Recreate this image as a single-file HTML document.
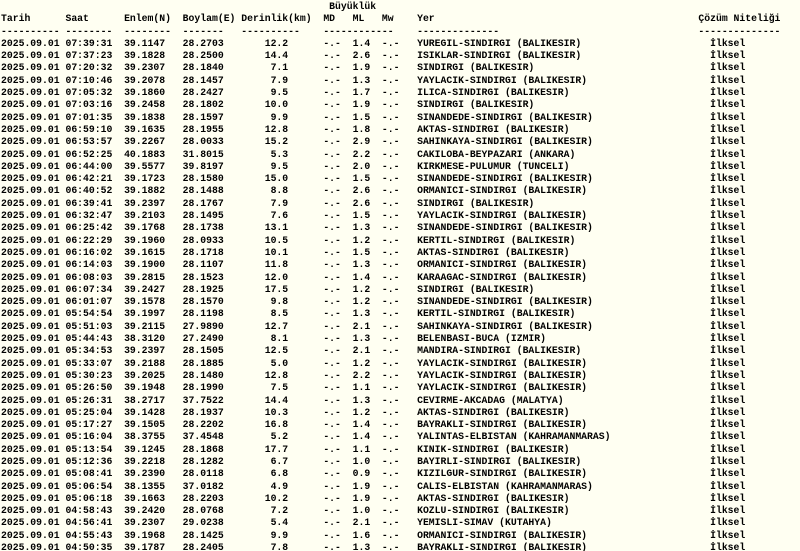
<!DOCTYPE html>
<html><head><meta charset="utf-8">
<style>
html,body{margin:0;padding:0;background:#fffff2;width:800px;height:551px;overflow:hidden}
#w{font-family:"Liberation Mono",monospace;font-weight:bold;font-size:9.78px;line-height:12.3px;color:#000;padding-left:1px;padding-top:1px}
.r{position:relative;white-space:pre;height:12.3px}
.r b{position:absolute;top:0;left:121ch}
.r i{position:absolute;top:0;left:119ch;font-style:normal}
</style></head><body><div id="w">
<div class="r">                                                        Büyüklük</div>
<div class="r">Tarih      Saat      Enlem(N)  Boylam(E) Derinlik(km)  MD   ML   Mw    Yer<i>Çözüm Niteliği</i></div>
<div class="r">---------- --------  --------  -------   ----------    ------------    --------------<i>--------------</i></div>
<div class="r">2025.09.01 07:39:31  39.1147   28.2703       12.2      -.-  1.4  -.-   YUREGIL-SINDIRGI (BALIKESIR)<b>İlksel</b></div>
<div class="r">2025.09.01 07:37:23  39.1828   28.2500       14.4      -.-  2.6  -.-   ISIKLAR-SINDIRGI (BALIKESIR)<b>İlksel</b></div>
<div class="r">2025.09.01 07:20:32  39.2307   28.1840        7.1      -.-  1.9  -.-   SINDIRGI (BALIKESIR)<b>İlksel</b></div>
<div class="r">2025.09.01 07:10:46  39.2078   28.1457        7.9      -.-  1.3  -.-   YAYLACIK-SINDIRGI (BALIKESIR)<b>İlksel</b></div>
<div class="r">2025.09.01 07:05:32  39.1860   28.2427        9.5      -.-  1.7  -.-   ILICA-SINDIRGI (BALIKESIR)<b>İlksel</b></div>
<div class="r">2025.09.01 07:03:16  39.2458   28.1802       10.0      -.-  1.9  -.-   SINDIRGI (BALIKESIR)<b>İlksel</b></div>
<div class="r">2025.09.01 07:01:35  39.1838   28.1597        9.9      -.-  1.5  -.-   SINANDEDE-SINDIRGI (BALIKESIR)<b>İlksel</b></div>
<div class="r">2025.09.01 06:59:10  39.1635   28.1955       12.8      -.-  1.8  -.-   AKTAS-SINDIRGI (BALIKESIR)<b>İlksel</b></div>
<div class="r">2025.09.01 06:53:57  39.2267   28.0033       15.2      -.-  2.9  -.-   SAHINKAYA-SINDIRGI (BALIKESIR)<b>İlksel</b></div>
<div class="r">2025.09.01 06:52:25  40.1883   31.8015        5.3      -.-  2.2  -.-   CAKILOBA-BEYPAZARI (ANKARA)<b>İlksel</b></div>
<div class="r">2025.09.01 06:44:00  39.5577   39.8197        9.5      -.-  2.0  -.-   KIRKMESE-PULUMUR (TUNCELI)<b>İlksel</b></div>
<div class="r">2025.09.01 06:42:21  39.1723   28.1580       15.0      -.-  1.5  -.-   SINANDEDE-SINDIRGI (BALIKESIR)<b>İlksel</b></div>
<div class="r">2025.09.01 06:40:52  39.1882   28.1488        8.8      -.-  2.6  -.-   ORMANICI-SINDIRGI (BALIKESIR)<b>İlksel</b></div>
<div class="r">2025.09.01 06:39:41  39.2397   28.1767        7.9      -.-  2.6  -.-   SINDIRGI (BALIKESIR)<b>İlksel</b></div>
<div class="r">2025.09.01 06:32:47  39.2103   28.1495        7.6      -.-  1.5  -.-   YAYLACIK-SINDIRGI (BALIKESIR)<b>İlksel</b></div>
<div class="r">2025.09.01 06:25:42  39.1768   28.1738       13.1      -.-  1.3  -.-   SINANDEDE-SINDIRGI (BALIKESIR)<b>İlksel</b></div>
<div class="r">2025.09.01 06:22:29  39.1960   28.0933       10.5      -.-  1.2  -.-   KERTIL-SINDIRGI (BALIKESIR)<b>İlksel</b></div>
<div class="r">2025.09.01 06:16:02  39.1615   28.1718       10.1      -.-  1.5  -.-   AKTAS-SINDIRGI (BALIKESIR)<b>İlksel</b></div>
<div class="r">2025.09.01 06:14:03  39.1900   28.1107       11.8      -.-  1.3  -.-   ORMANICI-SINDIRGI (BALIKESIR)<b>İlksel</b></div>
<div class="r">2025.09.01 06:08:03  39.2815   28.1523       12.0      -.-  1.4  -.-   KARAAGAC-SINDIRGI (BALIKESIR)<b>İlksel</b></div>
<div class="r">2025.09.01 06:07:34  39.2427   28.1925       17.5      -.-  1.2  -.-   SINDIRGI (BALIKESIR)<b>İlksel</b></div>
<div class="r">2025.09.01 06:01:07  39.1578   28.1570        9.8      -.-  1.2  -.-   SINANDEDE-SINDIRGI (BALIKESIR)<b>İlksel</b></div>
<div class="r">2025.09.01 05:54:54  39.1997   28.1198        8.5      -.-  1.3  -.-   KERTIL-SINDIRGI (BALIKESIR)<b>İlksel</b></div>
<div class="r">2025.09.01 05:51:03  39.2115   27.9890       12.7      -.-  2.1  -.-   SAHINKAYA-SINDIRGI (BALIKESIR)<b>İlksel</b></div>
<div class="r">2025.09.01 05:44:43  38.3120   27.2490        8.1      -.-  1.3  -.-   BELENBASI-BUCA (IZMIR)<b>İlksel</b></div>
<div class="r">2025.09.01 05:34:53  39.2397   28.1505       12.5      -.-  2.1  -.-   MANDIRA-SINDIRGI (BALIKESIR)<b>İlksel</b></div>
<div class="r">2025.09.01 05:33:07  39.2188   28.1885        5.0      -.-  1.2  -.-   YAYLACIK-SINDIRGI (BALIKESIR)<b>İlksel</b></div>
<div class="r">2025.09.01 05:30:23  39.2025   28.1480       12.8      -.-  2.2  -.-   YAYLACIK-SINDIRGI (BALIKESIR)<b>İlksel</b></div>
<div class="r">2025.09.01 05:26:50  39.1948   28.1990        7.5      -.-  1.1  -.-   YAYLACIK-SINDIRGI (BALIKESIR)<b>İlksel</b></div>
<div class="r">2025.09.01 05:26:31  38.2717   37.7522       14.4      -.-  1.3  -.-   CEVIRME-AKCADAG (MALATYA)<b>İlksel</b></div>
<div class="r">2025.09.01 05:25:04  39.1428   28.1937       10.3      -.-  1.2  -.-   AKTAS-SINDIRGI (BALIKESIR)<b>İlksel</b></div>
<div class="r">2025.09.01 05:17:27  39.1505   28.2202       16.8      -.-  1.4  -.-   BAYRAKLI-SINDIRGI (BALIKESIR)<b>İlksel</b></div>
<div class="r">2025.09.01 05:16:04  38.3755   37.4548        5.2      -.-  1.4  -.-   YALINTAS-ELBISTAN (KAHRAMANMARAS)<b>İlksel</b></div>
<div class="r">2025.09.01 05:13:54  39.1245   28.1868       17.7      -.-  1.1  -.-   KINIK-SINDIRGI (BALIKESIR)<b>İlksel</b></div>
<div class="r">2025.09.01 05:12:36  39.2218   28.1282        6.7      -.-  1.0  -.-   BAYIRLI-SINDIRGI (BALIKESIR)<b>İlksel</b></div>
<div class="r">2025.09.01 05:08:41  39.2390   28.0118        6.8      -.-  0.9  -.-   KIZILGUR-SINDIRGI (BALIKESIR)<b>İlksel</b></div>
<div class="r">2025.09.01 05:06:54  38.1355   37.0182        4.9      -.-  1.9  -.-   CALIS-ELBISTAN (KAHRAMANMARAS)<b>İlksel</b></div>
<div class="r">2025.09.01 05:06:18  39.1663   28.2203       10.2      -.-  1.9  -.-   AKTAS-SINDIRGI (BALIKESIR)<b>İlksel</b></div>
<div class="r">2025.09.01 04:58:43  39.2420   28.0768        7.2      -.-  1.0  -.-   KOZLU-SINDIRGI (BALIKESIR)<b>İlksel</b></div>
<div class="r">2025.09.01 04:56:41  39.2307   29.0238        5.4      -.-  2.1  -.-   YEMISLI-SIMAV (KUTAHYA)<b>İlksel</b></div>
<div class="r">2025.09.01 04:55:43  39.1968   28.1425        9.9      -.-  1.6  -.-   ORMANICI-SINDIRGI (BALIKESIR)<b>İlksel</b></div>
<div class="r">2025.09.01 04:50:35  39.1787   28.2405        7.8      -.-  1.3  -.-   BAYRAKLI-SINDIRGI (BALIKESIR)<b>İlksel</b></div>
</div></body></html>
